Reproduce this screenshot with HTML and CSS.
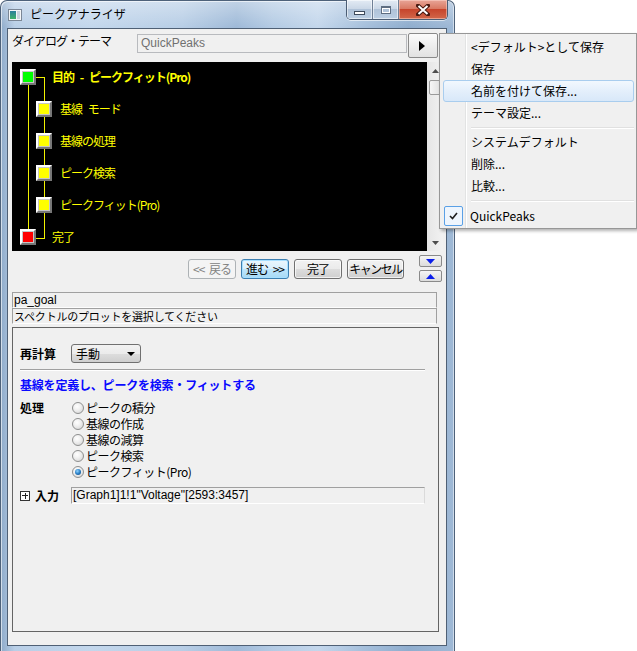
FILE: index.html
```html
<!DOCTYPE html>
<html lang="ja">
<head>
<meta charset="utf-8">
<title>ピークアナライザ</title>
<link rel="stylesheet" href="styles.css">
</head>
<body>
<div class="window">
  <div class="titlebar">
    <svg class="appicon" width="14" height="12" viewBox="0 0 14 12">
      <defs><linearGradient id="ai" x1="0" y1="0" x2="0" y2="1"><stop offset="0" stop-color="#2a7f9c"/><stop offset="1" stop-color="#3fb36a"/></linearGradient></defs>
      <rect x="0.5" y="0.5" width="13" height="11" fill="#f4f6f8" stroke="#7b8796"/>
      <rect x="2" y="2" width="6" height="8" fill="url(#ai)"/>
      <rect x="9" y="2" width="3" height="8" fill="#c9d3dd"/>
    </svg>
    <span class="title">ピークアナライザ</span>
    <div class="caption">
      <span class="cbtn cmin"><i></i></span>
      <span class="cbtn cmax"><i></i></span>
      <span class="cbtn cclose">
        <svg width="14" height="12" viewBox="0 0 14 12">
          <path d="M2 1.5 L12 10.5 M12 1.5 L2 10.5" stroke="#4a1a12" stroke-width="4" stroke-linecap="square"/>
          <path d="M2.5 2 L11.5 10 M11.5 2 L2.5 10" stroke="#ffffff" stroke-width="2"/>
        </svg>
      </span>
    </div>
  </div>
  <div class="client">
    <div class="themerow">
      <span class="themelabel">ダイアログ・テーマ</span>
      <span class="themebox">QuickPeaks</span>
      <span class="playbtn"><svg width="6" height="10" viewBox="0 0 6 10"><path d="M0 0 L6 5 L0 10 Z" fill="#000"/></svg></span>
    </div>
    <div class="treewrap">
      <div class="tree">
        <i class="tline v1"></i>
        <i class="tline h1"></i>
        <i class="tline v2"></i>
        <i class="tline h2"></i>
        <div class="trow root"><span class="node green"></span><span class="tlabel bold">目的 - ピークフィット(Pro)</span></div>
        <div class="trow child"><span class="node yellow"></span><span class="tlabel">基線 モード</span></div>
        <div class="trow child"><span class="node yellow"></span><span class="tlabel">基線の処理</span></div>
        <div class="trow child"><span class="node yellow"></span><span class="tlabel">ピーク検索</span></div>
        <div class="trow child"><span class="node yellow"></span><span class="tlabel">ピークフィット(Pro)</span></div>
        <div class="trow last"><span class="node red"></span><span class="tlabel">完了</span></div>
      </div>
      <div class="vscroll">
        <span class="sarrow"><svg width="7" height="4" viewBox="0 0 7 4"><path d="M0 4 L3.5 0 L7 4 Z" fill="#4d4d4d"/></svg></span>
        <span class="thumb"></span>
        <span class="strack"></span>
        <span class="sarrow"><svg width="7" height="4" viewBox="0 0 7 4"><path d="M0 0 L3.5 4 L7 0 Z" fill="#4d4d4d"/></svg></span>
      </div>
    </div>
    <div class="navrow">
      <span class="btn btn-back disabled">&lt;&lt; 戻る</span>
      <span class="btn btn-next focused">進む &gt;&gt;</span>
      <span class="btn btn-done">完了</span>
      <span class="btn btn-cancel">キャンセル</span>
      <div class="arrows">
        <span class="abtn"><svg width="9" height="5" viewBox="0 0 9 5"><path d="M0 0 L9 0 L4.5 5 Z" fill="#0b1eea"/></svg></span>
        <span class="abtn"><svg width="9" height="5" viewBox="0 0 9 5"><path d="M0 5 L9 5 L4.5 0 Z" fill="#0b1eea"/></svg></span>
      </div>
    </div>
    <div class="status">
      <div class="sline latin">pa_goal</div>
      <div class="sline narrow">スペクトルのプロットを選択してください</div>
    </div>
    <div class="panel">
      <div class="prow recalc">
        <span class="plabel">再計算</span>
        <span class="combo">手動<svg class="caret" width="8" height="4" viewBox="0 0 8 4"><path d="M0 0 L8 0 L4 4 Z" fill="#000"/></svg></span>
      </div>
      <div class="phr"></div>
      <div class="pheading">基線を定義し、ピークを検索・フィットする</div>
      <div class="prow proc">
        <span class="plabel">処理</span>
        <div class="radios">
          <div class="radio"><span class="rb"></span>ピークの積分</div>
          <div class="radio"><span class="rb"></span>基線の作成</div>
          <div class="radio"><span class="rb"></span>基線の減算</div>
          <div class="radio"><span class="rb"></span>ピーク検索</div>
          <div class="radio"><span class="rb on"></span>ピークフィット(Pro)</div>
        </div>
      </div>
      <div class="prow input">
        <span class="plabel"><i class="expander"></i>入力</span>
        <span class="field">[Graph1]1!1"Voltage"[2593:3457]</span>
      </div>
    </div>
  </div>
</div>

<div class="menu">
  <div class="mitem">&lt;デフォルト&gt;として保存</div>
  <div class="mitem">保存</div>
  <div class="mitem hot">名前を付けて保存...</div>
  <div class="mitem">テーマ設定...</div>
  <div class="msep"></div>
  <div class="mitem">システムデフォルト</div>
  <div class="mitem">削除...</div>
  <div class="mitem">比較...</div>
  <div class="msep"></div>
  <div class="mitem checked"><span class="check"><svg width="9" height="8" viewBox="0 0 9 8"><path d="M1 4 L3.5 6.5 L8 1" fill="none" stroke="#1e1e1e" stroke-width="1.6"/></svg></span>QuickPeaks</div>
</div>
</body>
</html>
```

FILE: styles.css
```css
* { box-sizing: border-box; }
html, body { margin: 0; padding: 0; }
body {
  width: 637px;
  height: 651px;
  overflow: hidden;
  position: relative;
  background: #ffffff;
  font-family: "Noto Sans CJK JP", "Noto Sans", sans-serif;
  font-size: 12px;
  color: #000;
}

/* ---------- window frame ---------- */
.window {
  width: 455px;
  height: 651px;
  border: 1px solid #4e627a;
  border-bottom: none;
  border-radius: 7px 7px 0 0;
  padding: 0 7px 5px 6px;
  display: flex;
  flex-direction: column;
  background:
    linear-gradient(180deg, rgba(255,255,255,0.35) 0, rgba(255,255,255,0) 26px),
    linear-gradient(90deg, #8fabca 0%, #b9cfe7 3%, #c3d7ec 20%, #b8cee6 40%, #9fbad8 52%, #b4cbe4 60%, #c4d7ec 70%, #a6c0dc 80%, #8fadce 90%, #9fb9d6 100%);
  box-shadow: inset 1px 1px 0 rgba(255,255,255,0.6), inset -1px 0 0 rgba(255,255,255,0.5);
}

.titlebar {
  height: 27px;
  display: flex;
  align-items: flex-start;
  flex-shrink: 0;
}
.appicon { margin: 8px 0 0 1px; flex-shrink: 0; }
.title {
  margin: 5px 0 0 8px;
  line-height: 16px;
  font-size: 12px;
  color: #000;
}
.caption {
  margin: -1px -1px 0 auto;
  display: flex;
  height: 20px;
  border: 1px solid #4b5d74;
  border-top: none;
  border-radius: 0 0 5px 5px;
  overflow: hidden;
  box-shadow: 0 1px 0 rgba(255,255,255,0.6);
}
.cbtn {
  height: 19px;
  display: flex;
  align-items: center;
  justify-content: center;
}
.cmin, .cmax {
  width: 26px;
  background: linear-gradient(180deg, #e3ebf4 0%, #cbd8e7 45%, #afc2d8 50%, #bccfe3 100%);
  border-right: 1px solid #6f8096;
  box-shadow: inset 0 0 0 1px rgba(255,255,255,0.55);
}
.cmin i {
  display: block;
  width: 11px;
  height: 4px;
  margin-top: 7px;
  background: #fff;
  border: 1px solid #3e4b5c;
}
.cmax i {
  display: block;
  width: 10px;
  height: 8px;
  background: transparent;
  border: 1px solid #5e6e82;
  border-top-width: 2px;
  box-shadow: inset 0 0 0 1px #fff;
}
.cclose {
  width: 48px;
  background: linear-gradient(180deg, #e8a597 0%, #d97a64 45%, #c7452c 50%, #d2674a 100%);
  box-shadow: inset 0 0 0 1px rgba(255,220,210,0.5);
}

/* ---------- client area ---------- */
.client {
  flex: 1;
  background: #f0f0f0;
  border: 1px solid #4f6075;
  padding: 0 3px 0 4px;
  display: flex;
  flex-direction: column;
}

.themerow {
  height: 33px;
  display: flex;
  align-items: flex-start;
  flex-shrink: 0;
}
.themelabel {
  width: 125px;
  margin-top: 4px;
  line-height: 16px;
  letter-spacing: -1px;
}
.themebox {
  width: 270px;
  height: 19px;
  margin-top: 5px;
  border: 1px solid #b8babe;
  background: #f0f0f0;
  color: #707070;
  font-family: "Liberation Sans", sans-serif;
  font-size: 12px;
  line-height: 17px;
  padding-left: 3px;
}
.playbtn {
  width: 30px;
  height: 25px;
  margin: 4px 0 0 1px;
  border: 1px solid #8a8a8a;
  border-radius: 2px;
  background: linear-gradient(180deg, #fbfbfb 0%, #eeeeee 50%, #e2e2e2 100%);
  display: flex;
  align-items: center;
  justify-content: center;
  padding-right: 2px;
}

/* ---------- tree ---------- */
.treewrap {
  height: 189px;
  display: flex;
  flex-shrink: 0;
}
.tree {
  position: relative;
  flex: 1;
  background: #000;
  padding: 7px 0 0 8px;
}
.tline { position: absolute; background: #f2f200; display: block; }
.tline.v1 { left: 16px; top: 23px; width: 1px; height: 145px; }
.tline.h1 { left: 24px; top: 15px; width: 9px; height: 1px; }
.tline.v2 { left: 32px; top: 15px; width: 1px; height: 162px; }
.tline.h2 { left: 24px; top: 176px; width: 9px; height: 1px; }

.trow {
  position: relative;
  display: flex;
  align-items: center;
  height: 16px;
  margin-bottom: 16px;
}
.trow.child { margin-left: 16px; }
.trow.last { margin-top: 1px; }
.node {
  width: 16px;
  height: 16px;
  flex-shrink: 0;
  border: 2px solid;
  border-color: #ffffff #777777 #777777 #ffffff;
  box-shadow: inset 0 0 0 1px #c6c6c6;
}
.node.green { background: #00ff00; }
.node.yellow { background: #ffff00; }
.node.red { background: #ff0000; }
.tlabel {
  color: #ffff00;
  font-size: 12px;
  line-height: 16px;
  letter-spacing: -1px;
  word-spacing: 4px;
  margin-left: 8px;
  white-space: pre;
}
.tlabel.bold { font-weight: bold; }
.root .tlabel, .last .tlabel { margin-left: 16px; }

.vscroll {
  width: 16px;
  background: linear-gradient(90deg, #e6e6e6, #f2f2f2);
  display: flex;
  flex-direction: column;
  align-items: center;
}
.sarrow {
  height: 17px;
  width: 16px;
  display: flex;
  align-items: center;
  justify-content: center;
}
.thumb {
  width: 13px;
  height: 15px;
  margin-top: 1px;
  border: 1px solid #9a9a9a;
  border-radius: 2px;
  background: linear-gradient(90deg, #f6f6f6, #dedede);
}
.strack { flex: 1; }

/* ---------- nav buttons ---------- */
.navrow {
  height: 37px;
  display: flex;
  align-items: flex-start;
  flex-shrink: 0;
  padding-left: 176px;
}
.btn {
  height: 20px;
  margin-top: 8px;
  margin-right: 5px;
  border: 1px solid #707070;
  border-radius: 3px;
  background: linear-gradient(180deg, #f2f2f2 0%, #ebebeb 50%, #dddddd 51%, #cfcfcf 100%);
  box-shadow: inset 0 0 0 1px rgba(255,255,255,0.7);
  display: flex;
  align-items: center;
  justify-content: center;
  font-size: 12px;
  letter-spacing: -1px;
  word-spacing: 3px;
  line-height: 16px;
  white-space: pre;
}
.btn-back { width: 48px; }
.btn-next { width: 48px; }
.btn-done { width: 48px; }
.btn-cancel { width: 57px; margin-right: 0; letter-spacing: -1.5px; }
.btn.disabled {
  color: #838383;
  border-color: #adb2b5;
  background: #f4f4f4;
  box-shadow: none;
}
.btn.focused {
  border-color: #3c7fb1;
  background: linear-gradient(180deg, #eaf6fd 0%, #d9f0fc 50%, #bee6fd 51%, #a7d9f5 100%);
  box-shadow: inset 0 0 0 1px #a8e0ff;
}
.arrows {
  margin-left: 15px;
  margin-top: 4px;
  display: flex;
  flex-direction: column;
  gap: 3px;
}
.abtn {
  width: 23px;
  height: 12px;
  border: 1px solid #8a8a8a;
  border-radius: 2px;
  background: linear-gradient(180deg, #f5f5f5, #dcdcdc);
  display: flex;
  align-items: center;
  justify-content: center;
}

/* ---------- status lines ---------- */
.status {
  margin-top: 4px;
  width: 425px;
  flex-shrink: 0;
}
.sline {
  height: 16px;
  border: 1px solid;
  border-color: #a0a0a0 #a0a0a0 #fdfdfd #a0a0a0;
  line-height: 14px;
  padding-left: 1px;
  white-space: nowrap;
}
.sline.latin { font-family: "Liberation Sans", sans-serif; font-size: 12px; }
.sline.narrow { font-size: 11px; letter-spacing: -0.2px; }

/* ---------- panel ---------- */
.panel {
  margin-top: 3px;
  width: 427px;
  height: 305px;
  border: 1px solid #646464;
  padding: 16px 13px 0 7px;
  flex-shrink: 0;
}
.prow { display: flex; }
.plabel {
  width: 51px;
  flex-shrink: 0;
  font-weight: bold;
  line-height: 16px;
  display: flex;
  align-items: center;
}
.recalc { align-items: center; height: 19px; }
.combo {
  width: 70px;
  height: 19px;
  border: 1px solid #707070;
  border-radius: 3px;
  background: linear-gradient(180deg, #f2f2f2 0%, #ebebeb 50%, #dddddd 51%, #cfcfcf 100%);
  display: flex;
  align-items: center;
  padding-left: 4px;
  line-height: 16px;
}
.caret { margin-left: auto; margin-right: 5px; }
.phr {
  margin-top: 6px;
  width: 405px;
  height: 2px;
  border-top: 1px solid #a0a0a0;
  border-bottom: 1px solid #ffffff;
}
.pheading {
  margin-top: 6px;
  line-height: 16px;
  color: #0a0aff;
  font-weight: bold;
  letter-spacing: -0.2px;
}
.proc { margin-top: 7px; align-items: flex-start; }
.radios { margin-left: 1px; }
.radio {
  height: 16px;
  display: flex;
  align-items: center;
  line-height: 16px;
  letter-spacing: -0.5px;
}
.rb {
  width: 12px;
  height: 12px;
  border-radius: 50%;
  border: 1px solid #8e8f8f;
  background: radial-gradient(circle at 40% 35%, #ffffff 0%, #f0f0f0 40%, #cfcfcf 100%);
  margin-right: 2px;
  display: flex;
  align-items: center;
  justify-content: center;
  flex-shrink: 0;
}
.rb.on::after {
  content: "";
  width: 6px;
  height: 6px;
  border-radius: 50%;
  background: radial-gradient(circle at 40% 35%, #8fd3ff 0%, #2a7fc6 50%, #0b3f74 100%);
}
.input { margin-top: 7px; align-items: center; }
.expander {
  width: 10px;
  height: 10px;
  border: 1px solid #333;
  margin-right: 5px;
  display: block;
  background:
    linear-gradient(#222, #222) center / 6px 1px no-repeat,
    linear-gradient(#222, #222) center / 1px 6px no-repeat,
    #ffffff;
}
.field {
  width: 354px;
  height: 17px;
  border: 1px solid;
  border-color: #a0a0a0 #dadada #ffffff #a0a0a0;
  font-family: "Liberation Sans", sans-serif;
  font-size: 12px;
  line-height: 15px;
  padding-left: 1px;
  white-space: nowrap;
}

/* ---------- popup menu ---------- */
.menu {
  position: absolute;
  left: 439px;
  top: 33px;
  width: 198px;
  height: 196px;
  border: 1px solid #979797;
  padding: 2px;
  background:
    linear-gradient(90deg, transparent 25px, #e2e3e3 25px, #e2e3e3 26px, #ffffff 26px, #ffffff 27px, transparent 27px),
    #f0f0f0;
  box-shadow: 2px 2px 3px rgba(0,0,0,0.3);
  z-index: 10;
}
.mitem {
  height: 22px;
  margin-left: 1px;
  border: 1px solid transparent;
  border-radius: 3px;
  padding-left: 27px;
  display: flex;
  align-items: center;
  line-height: 16px;
  white-space: nowrap;
  font-size: 12px;
}
.mitem.hot {
  border-color: #a9cdee;
  background: linear-gradient(180deg, #f2f8fe 0%, #e4effb 50%, #d8e8f9 100%);
}
.mitem.checked { padding-left: 0; margin-top: 1px; }
.check {
  width: 19px;
  height: 20px;
  border: 1px solid #5aa0e6;
  border-radius: 2px;
  background: #eef5fd;
  display: flex;
  align-items: center;
  justify-content: center;
  margin-right: 7px;
}
.msep {
  height: 7px;
  margin-left: 29px;
  background: linear-gradient(180deg, transparent 3px, #e0e0e0 3px, #e0e0e0 4px, #ffffff 4px, #ffffff 5px, transparent 5px);
}
```
